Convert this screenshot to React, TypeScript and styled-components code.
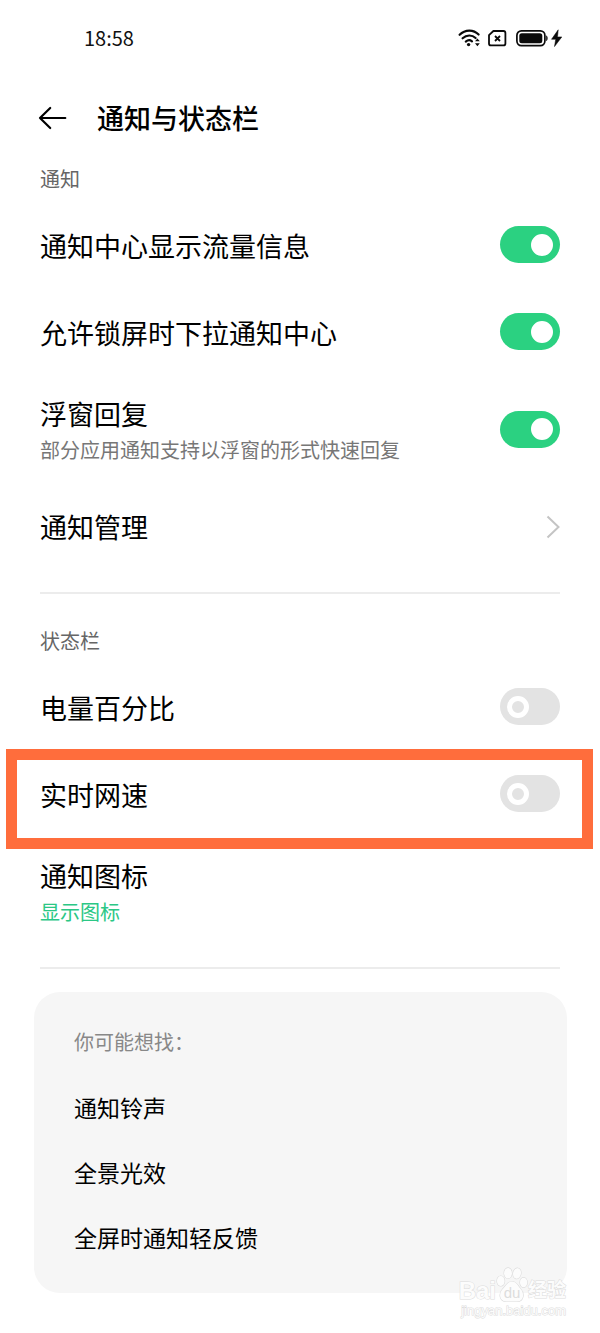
import React, { useId, useState } from "react";
import styled, { createGlobalStyle } from "styled-components";

const GlobalStyle = createGlobalStyle`
  *, *::before, *::after { box-sizing: border-box; }
  body {
    margin: 0;
    background: #fff;
    color: #000;
    font-family: "Noto Sans CJK SC", sans-serif;
  }
`;

const Page = styled.div`
  position: relative;
  padding-bottom: 40px;
`;

const StatusBar = styled.div`
  display: flex;
  align-items: center;
  justify-content: space-between;
  height: 76px;
  padding: 0 38px 0 84px;
`;

const Clock = styled.time`
  font-size: 20px;
  line-height: 28px;
  color: #111;
`;

const Header = styled.header`
  display: flex;
  align-items: center;
  gap: 30px;
  height: 84px;
  padding: 0 38px;
`;

const BackButton = styled.button`
  display: flex;
  padding: 0;
  border: 0;
  background: none;
  color: #000;
  cursor: pointer;
`;

const Title = styled.h1`
  margin: 0;
  font-size: 27px;
  line-height: 40px;
  font-weight: 500;
`;

const Section = styled.section`
  margin: 0 40px;
  padding-bottom: 22px;
  border-bottom: 2px solid #ececec;

  & + & {
    padding-top: 28px;
  }
`;

const SectionTitle = styled.h2`
  margin: 0;
  padding: 4px 0 7px;
  font-size: 20px;
  line-height: 30px;
  font-weight: 400;
  color: #666;
`;

const Row = styled.div<{ $tall?: boolean; $marked?: boolean }>`
  position: relative;
  display: flex;
  align-items: center;
  justify-content: space-between;
  width: 100%;
  height: ${(p) => (p.$tall ? 108 : 87)}px;
  color: inherit;
  text-decoration: none;

  &::after {
    content: "";
    display: ${(p) => (p.$marked ? "block" : "none")};
    position: absolute;
    inset: -1px -33px -12px -34px;
    border: 11px solid #ff6d3c;
    pointer-events: none;
  }
`;

const RowText = styled.div`
  display: flex;
  flex-direction: column;
  padding-top: 2px;
`;

const RowLabel = styled.label`
  font-size: 27px;
  line-height: 40px;
`;

const RowNote = styled.span<{ $accent?: boolean }>`
  font-size: 20px;
  line-height: 32px;
  color: ${(p) => (p.$accent ? "#2bc785" : "#777")};
`;

const Switch = styled.input`
  appearance: none;
  display: flex;
  align-items: center;
  flex: none;
  width: 60px;
  height: 37px;
  margin: 0;
  padding: 0 7px;
  border-radius: 19px;
  background: #e3e3e3;
  cursor: pointer;

  &::before {
    content: "";
    width: 22px;
    height: 22px;
    border: 5px solid #fff;
    border-radius: 50%;
  }

  &:checked {
    justify-content: flex-end;
    background: #2bd181;
  }

  &:checked::before {
    background: #fff;
  }
`;

const Suggestions = styled.aside`
  margin: 23px 33px 0 34px;
  padding: 33px 40px 23px;
  border-radius: 26px;
  background: #f6f6f6;
`;

const SuggestionsTitle = styled.h2`
  margin: 0 0 16px;
  font-size: 20px;
  line-height: 34px;
  font-weight: 400;
  color: #888;
`;

const SuggestionLink = styled.a`
  display: block;
  font-size: 23px;
  line-height: 65px;
  color: #000;
  text-decoration: none;
`;

const Watermark = styled.div`
  position: absolute;
  right: 34px;
  bottom: 15px;
  display: flex;
  flex-direction: column;
  align-items: flex-end;
  color: #fcfcfc;
  font-family: "Liberation Sans", "Noto Sans CJK SC", sans-serif;
  -webkit-text-stroke: 1px #dcdcdc;
  paint-order: stroke fill;
`;

const Brand = styled.div`
  display: flex;
  align-items: flex-end;
  font-size: 24px;
  line-height: 24px;
  font-weight: 700;
`;

const BrandCjk = styled.span`
  font-size: 19px;
`;

const BrandUrl = styled.span`
  font-size: 13px;
  line-height: 15px;
`;

function StatusIcons() {
  return (
    <svg width="104" height="18" viewBox="0 0 104 18" fill="none" aria-hidden="true">
      <g stroke="#0a0a0a" strokeWidth="2.2" strokeLinecap="round">
        <path d="M1.6 5.8C7.2.2 15.4.2 20.6 5.5" />
        <path d="M4.6 9.3c4-3.7 9.4-3.7 13-.3" />
        <path d="M7.8 12.6c2-1.7 4.4-1.7 6.2-.3" />
      </g>
      <circle cx="10.6" cy="15.6" r="1.7" fill="#0a0a0a" />
      <path d="M17 12.3l2.4-2.9 2.4 2.9zM17 14.3l2.4 2.9 2.4-2.9z" fill="#0a0a0a" />
      <path d="M35.4 2h10a2 2 0 012 2v10.4a2 2 0 01-2 2h-12.4a2 2 0 01-2-2V6.2z" stroke="#0a0a0a" strokeWidth="1.8" strokeLinejoin="round" />
      <path d="M37 7l5 5M42 7l-5 5" stroke="#0a0a0a" strokeWidth="1.8" />
      <rect x="58.9" y="1.9" width="28" height="14.7" rx="4.5" stroke="#0a0a0a" strokeWidth="1.7" />
      <rect x="61.3" y="4.2" width="23" height="10.1" rx="2.5" fill="#0a0a0a" />
      <path d="M88.2 6.5c1.9.5 1.9 5 0 5.5z" fill="#0a0a0a" />
      <path d="M100.2.8L93.5 10.3h4.2L96.5 17.6l7.3-9.7h-4.3z" fill="#0a0a0a" stroke="#0a0a0a" strokeWidth="0.5" strokeLinejoin="round" />
    </svg>
  );
}

function BackArrow() {
  return (
    <svg width="29" height="24" viewBox="0 0 29 24" fill="none" stroke="currentColor" strokeWidth="2.2" strokeLinecap="round" strokeLinejoin="round" aria-hidden="true">
      <path d="M27.3 12H2M12.2 2L2 12l10.2 10" />
    </svg>
  );
}

function Chevron() {
  return (
    <svg width="14" height="24" viewBox="0 0 14 24" fill="none" stroke="#c4c4c4" strokeWidth="2" aria-hidden="true">
      <path d="M1.5 1.5L12.5 12 1.5 22.5" />
    </svg>
  );
}

function Paw() {
  return (
    <svg width="32" height="36" viewBox="0 0 32 36" fill="#fcfcfc" stroke="#dcdcdc" strokeWidth="1.2" aria-hidden="true">
      <ellipse cx="4.8" cy="14" rx="3.8" ry="5" />
      <ellipse cx="12" cy="6.2" rx="3.9" ry="5.3" />
      <ellipse cx="21" cy="6.4" rx="3.9" ry="5.3" transform="rotate(12 21 6.4)" />
      <ellipse cx="27.6" cy="15.5" rx="3.6" ry="4.8" />
      <path d="M16 14.5c4.5 0 5.5 4 8.5 7.3 4 4.2 3.7 12.7-3.5 12.7H10.5C3 34.5 2.5 26 7 21.8c3.3-3 4.5-7.3 9-7.3z" />
      <text x="16" y="31" textAnchor="middle" fontSize="15" fontWeight="400" fill="#dcdcdc" stroke="none">du</text>
    </svg>
  );
}

type SwitchRowProps = { label: string; note?: string; on?: boolean; marked?: boolean };

function SwitchRow({ label, note, on = false, marked }: SwitchRowProps) {
  const id = useId();
  const [checked, setChecked] = useState(on);
  return (
    <Row $tall={Boolean(note)} $marked={marked}>
      <RowText>
        <RowLabel htmlFor={id}>{label}</RowLabel>
        {note && <RowNote>{note}</RowNote>}
      </RowText>
      <Switch id={id} type="checkbox" checked={checked} onChange={(e) => setChecked(e.target.checked)} />
    </Row>
  );
}

export default function App() {
  return (
    <Page>
      <GlobalStyle />
      <StatusBar>
        <Clock>18:58</Clock>
        <StatusIcons />
      </StatusBar>
      <Header>
        <BackButton type="button" aria-label="返回">
          <BackArrow />
        </BackButton>
        <Title>通知与状态栏</Title>
      </Header>
      <main>
        <Section>
          <SectionTitle>通知</SectionTitle>
          <SwitchRow label="通知中心显示流量信息" on />
          <SwitchRow label="允许锁屏时下拉通知中心" on />
          <SwitchRow label="浮窗回复" note="部分应用通知支持以浮窗的形式快速回复" on />
          <Row as="a" href="#manage">
            <RowLabel as="span">通知管理</RowLabel>
            <Chevron />
          </Row>
        </Section>
        <Section>
          <SectionTitle>状态栏</SectionTitle>
          <SwitchRow label="电量百分比" />
          <SwitchRow label="实时网速" marked />
          <Row as="a" href="#icons" $tall>
            <RowText>
              <RowLabel as="span">通知图标</RowLabel>
              <RowNote $accent>显示图标</RowNote>
            </RowText>
          </Row>
        </Section>
        <Suggestions>
          <SuggestionsTitle>你可能想找：</SuggestionsTitle>
          <SuggestionLink href="#ringtone">通知铃声</SuggestionLink>
          <SuggestionLink href="#lighting">全景光效</SuggestionLink>
          <SuggestionLink href="#haptics">全屏时通知轻反馈</SuggestionLink>
        </Suggestions>
      </main>
      <Watermark>
        <Brand>
          <span>Bai</span>
          <Paw />
          <BrandCjk>经验</BrandCjk>
        </Brand>
        <BrandUrl>jingyan.baidu.com</BrandUrl>
      </Watermark>
    </Page>
  );
}
